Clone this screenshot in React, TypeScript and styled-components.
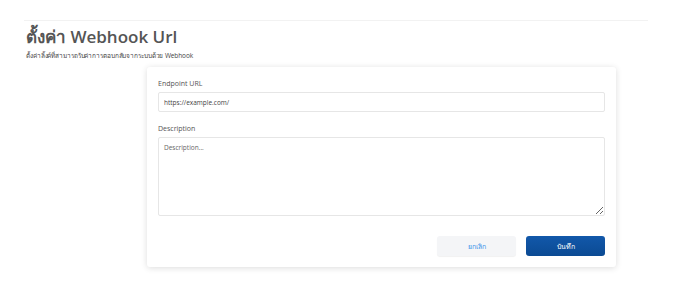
import styled, { createGlobalStyle } from 'styled-components'

const GlobalStyle = createGlobalStyle`
  html, body {
    margin: 0;
    padding: 0;
    background: #ffffff;
    font-family: "Open Sans", "Noto Sans", "DejaVu Sans", sans-serif;
  }
`

const Page = styled.div`
  width: 676px;
  height: 300px;
  overflow: hidden;
  padding: 0 28px 0 24px;
  box-sizing: border-box;
`

const Header = styled.header`
  border-top: 1px solid #f2f2f2;
  margin-top: 20px;
  padding: 5px 2px 0;
`

const Title = styled.h1`
  margin: 0;
  font-size: 17px;
  line-height: 22px;
  font-weight: 600;
  color: #555;
`

const Subtitle = styled.p`
  margin: 3px 0 0;
  font-size: 6.5px;
  line-height: 10px;
  color: #444;
  letter-spacing: -0.1px;
`

const Card = styled.section`
  margin: 6px 0 0 123px;
  width: 469px;
  height: 200px;
  box-sizing: border-box;
  padding: 12px 11px 11px;
  background: #fff;
  border-radius: 3px;
  box-shadow: 0 1px 6px rgba(0, 0, 0, 0.14);
  display: flex;
  flex-direction: column;
`

const Field = styled.div<{ $gap?: number }>`
  display: flex;
  flex-direction: column;
  gap: 4px;
  margin-bottom: ${(p) => p.$gap ?? 0}px;
`

const Label = styled.label`
  font-size: 7px;
  line-height: 9px;
  color: #555;
`

const Input = styled.input`
  height: 20px;
  box-sizing: border-box;
  border: 1px solid #e6e6e6;
  border-radius: 2px;
  padding: 0 5px;
  font: inherit;
  font-size: 6.5px;
  color: #444;
  outline: none;
`

const TextArea = styled.textarea`
  height: 79px;
  box-sizing: border-box;
  border: 1px solid #e6e6e6;
  border-radius: 2px;
  padding: 5px;
  font: inherit;
  font-size: 6.5px;
  color: #444;
  resize: vertical;
  outline: none;
  &::placeholder {
    color: #666;
  }
`

const Actions = styled.div`
  margin-top: auto;
  display: flex;
  justify-content: flex-end;
  gap: 10px;
`

const Button = styled.button<{ $primary?: boolean }>`
  width: 79px;
  height: 20px;
  border: none;
  border-radius: 3px;
  font: inherit;
  font-size: 7px;
  cursor: pointer;
  background: ${(p) =>
    p.$primary ? 'linear-gradient(#1258aa, #0b4a93)' : '#f4f5f7'};
  color: ${(p) => (p.$primary ? '#fff' : '#3f95ea')};
  box-shadow: ${(p) => (p.$primary ? 'none' : '0 1px 1px rgba(0,0,0,0.06)')};
`

export default function App() {
  return (
    <>
      <GlobalStyle />
      <Page>
        <Header>
          <Title>ตั้งค่า Webhook Url</Title>
          <Subtitle>ตั้งค่าลิ้งค์ที่สามารถรับค่าการตอบกลับจากระบบด้วย Webhook</Subtitle>
        </Header>
        <Card>
          <Field $gap={12}>
            <Label>Endpoint URL</Label>
            <Input defaultValue="https://example.com/" />
          </Field>
          <Field>
            <Label>Description</Label>
            <TextArea placeholder="Description..." />
          </Field>
          <Actions>
            <Button>ยกเลิก</Button>
            <Button $primary>บันทึก</Button>
          </Actions>
        </Card>
      </Page>
    </>
  )
}
